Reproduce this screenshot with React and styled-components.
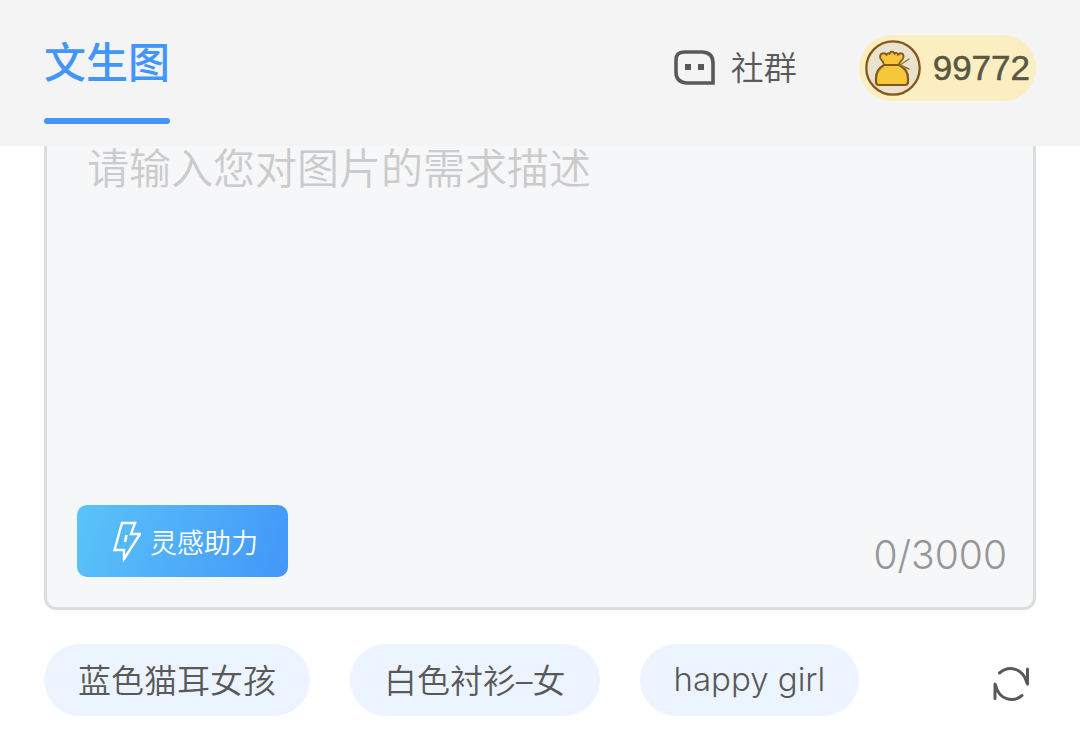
import React, { useState } from 'react';
import styled, { createGlobalStyle } from 'styled-components';

const MAX_LENGTH = 3000;
const suggestions = ['蓝色猫耳女孩', '白色衬衫–女', 'happy girl'];

const App = () => {
  const [prompt, setPrompt] = useState('');

  return (
    <Page>
      <GlobalStyle />
      <Header>
        <Tab type="button">文生图</Tab>
        <HeaderActions>
          <GroupButton type="button">
            <ChatIcon />
            社群
          </GroupButton>
          <CoinBadge>
            <CoinIcon />
            99772
          </CoinBadge>
        </HeaderActions>
      </Header>
      <Main>
        <PromptPanel>
          <PromptInput
            aria-label="图片描述"
            placeholder="请输入您对图片的需求描述"
            maxLength={MAX_LENGTH}
            value={prompt}
            onChange={(e) => setPrompt(e.target.value)}
          />
          <PanelFooter>
            <InspireButton type="button">
              <BoltIcon />
              灵感助力
            </InspireButton>
            <Counter>{prompt.length}/{MAX_LENGTH}</Counter>
          </PanelFooter>
        </PromptPanel>
        <SuggestionRow>
          {suggestions.map((text) => (
            <Chip key={text} type="button" onClick={() => setPrompt(text)}>{text}</Chip>
          ))}
          <RefreshButton type="button" aria-label="换一批">
            <RefreshIcon />
          </RefreshButton>
        </SuggestionRow>
      </Main>
    </Page>
  )
}

export default App

const ChatIcon = () => (
  <svg width="42" height="36" viewBox="0 0 42 36" fill="none">
    <path d="M10 2H29Q39 3 39 13V33H12Q2 32 2 22V10Q2 2 10 2Z" stroke="#595959" strokeWidth="3.6" />
    <path d="M11 14h6v6h-6zM24 14h6v6h-6z" fill="#595959" />
  </svg>
)

const CoinIcon = () => (
  <svg width="56" height="56" viewBox="0 0 56 56" fill="none" strokeLinecap="round" strokeLinejoin="round">
    <circle cx="28" cy="28" r="26.7" fill="#e9e2cd" stroke="#85581a" strokeWidth="2.3" />
    <path d="M19 25C19 21 15 20 15 17C15 13 20 12 21.500 15C22 13 24 13 24.500 14C25 11 29 11 29.500 14C31 12 33 13 33 15C35 12 39 13 38.500 17C38 21 34 21 34 25Z" fill="#f6c63b" stroke="#85581a" strokeWidth="1.8" />
    <path d="M19 25H34C40 28 43 32 43 38V42Q43 45 40 45H14Q11 45 11 42V38C11 32 14 28 19 25Z" fill="#f6c63b" stroke="#85581a" strokeWidth="2.2" />
    <path d="M35 25L44 19M35 25L44 29" stroke="#9a7330" strokeWidth="1.5" />
  </svg>
)

const BoltIcon = () => (
  <svg width="28" height="42" viewBox="0 0 28 42" fill="none" stroke="#fff">
    <path d="M9 3H22L18 14H27L11 39V30H1.500Z" strokeWidth="2.4" />
    <path d="M13.500 15L12 22" strokeWidth="2.6" />
  </svg>
)

const RefreshIcon = () => (
  <svg width="38" height="38" viewBox="0 0 38 38" fill="none" stroke="#595959" strokeWidth="3" strokeLinecap="round">
    <path d="M7.500 8C17 0 31 3 35 18M35.500 4V19" />
    <path d="M30 30.500C21 38 7 35 3.500 20M3 19V33.500" />
  </svg>
)

const GlobalStyle = createGlobalStyle`
    * {
        box-sizing: border-box;
    }

    body {
        margin: 0;
        background-color: #fff;
        font-family: Inter, 'Noto Sans CJK SC', sans-serif;
        font-weight: 350;
    }

    button, textarea {
        margin: 0;
        padding: 0;
        border: none;
        background: none;
        font: inherit;
        color: inherit;
    }

    button {
        cursor: pointer;
    }

    svg {
        display: block;
        flex: none;
    }
`
const Page = styled.div`
    color: #595959;
`
const Header = styled.header`
    display: flex;
    justify-content: space-between;
    align-items: flex-start;
    height: 146px;
    padding: 35px 44px 0;
    background-color: #f4f4f4;
`
const Tab = styled.button`
    display: flex;
    flex-direction: column;
    justify-content: space-between;
    height: 89px;
    color: #4396f9;
    font-size: 42px;
    font-weight: 500;
    line-height: 56px;

    &::after {
        content: '';
        width: 100%;
        height: 6px;
        border-radius: 3px;
        background-color: #4396f9;
    }
`
const HeaderActions = styled.div`
    display: flex;
    align-items: center;
    gap: 62px;
`
const GroupButton = styled.button`
    display: flex;
    align-items: center;
    gap: 15px;
    font-size: 33px;
    line-height: 66px;
`
const CoinBadge = styled.div`
    display: flex;
    align-items: center;
    gap: 12px;
    height: 66px;
    padding: 0 6px;
    border-radius: 33px;
    background-color: #fbeec0;
    color: #5a5643;
    font-family: 'Liberation Sans', Arial, sans-serif;
    font-size: 35px;
    -webkit-text-stroke: 0.5px #5a5643;
`
const Main = styled.main`
    padding: 0 44px;
`
const PromptPanel = styled.section`
    border: 3px solid #dcdddf;
    border-top: none;
    border-radius: 0 0 12px 12px;
    background-color: #f6f7f9;
`
const PromptInput = styled.textarea`
    display: block;
    width: 100%;
    height: 359px;
    padding: 0 40px;
    outline: none;
    resize: none;
    color: #595959;
    font-size: 42px;
    line-height: 46px;

    &::placeholder {
        color: #cbcbcb;
        opacity: 1;
    }
`
const PanelFooter = styled.div`
    display: flex;
    justify-content: space-between;
    align-items: flex-end;
    padding: 0 26px 30px 30px;
`
const InspireButton = styled.button`
    display: flex;
    align-items: center;
    gap: 9px;
    width: 211px;
    height: 72px;
    padding-left: 36px;
    border-radius: 10px;
    background: linear-gradient(110deg, #5ac4f9, #4396f9);
    color: #fff;
    font-size: 27px;
`
const Counter = styled.span`
    color: #969696;
    font-size: 39px;
    line-height: 44px;
`
const SuggestionRow = styled.div`
    display: flex;
    align-items: center;
    gap: 40px;
    padding-top: 34px;
`
const Chip = styled.button`
    height: 72px;
    padding: 0 34px 2px;
    border-radius: 36px;
    background-color: #ecf5ff;
    font-size: 33px;
    white-space: nowrap;
`
const RefreshButton = styled.button`
    margin: 8px 6px 0 auto;
`
